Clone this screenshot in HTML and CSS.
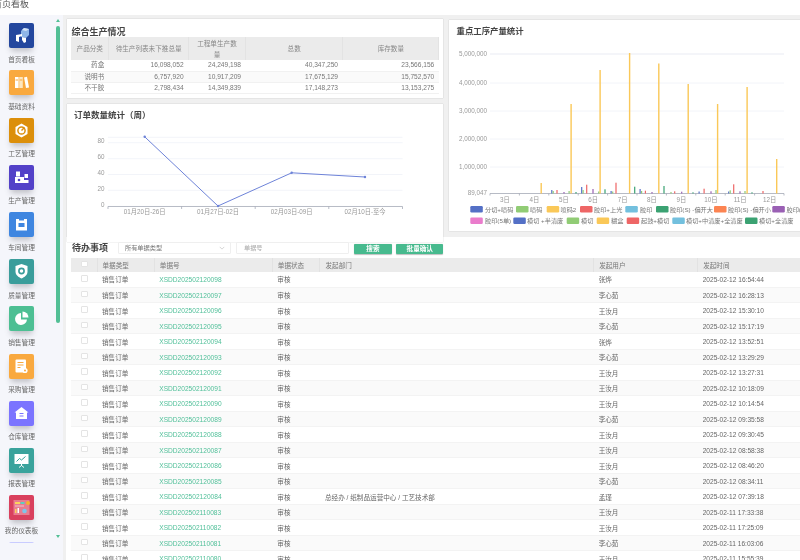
FILE: index.html
```html
<!DOCTYPE html>
<html lang="zh">
<head>
<meta charset="utf-8">
<title>首页看板</title>
<link rel="stylesheet" href="styles.css">
</head>
<body>
<header class="topbar"><span class="topbar-title">首页看板</span></header>
<div class="shell">
  <aside class="sidebar">
    <nav class="nav">
      <a class="nav-item"><span class="ico c1"><svg viewBox="0 0 25 25"><path d="M12 8l3-3 5 1v6l-3 3-5-1z" fill="#8fb6e8"/><path d="M15 5l5 1-3 2-4-1z" fill="#d5e4f7"/><path d="M7 12l6-1v2l-3 1v5l-3-1z" fill="#fff"/><path d="M13 14l4 1v4l-2 1-2-3z" fill="#fff"/></svg></span><span class="nav-label">首页看板</span></a>
      <a class="nav-item"><span class="ico c2"><svg viewBox="0 0 25 25"><rect x="6" y="7" width="3.6" height="11" fill="#fff"/><rect x="10.2" y="7" width="3.6" height="11" fill="#fde6bf"/><path d="M15 7.4l3-.6 2 10.6-3 .6z" fill="#fff"/><path d="M6.5 10h2.6M10.7 10h2.6" stroke="#f9a93f"/></svg></span><span class="nav-label">基础资料</span></a>
      <a class="nav-item"><span class="ico c3"><svg viewBox="0 0 25 25"><path d="M12.5 5.5l6 3.5v7l-6 3.5-6-3.5V9z" fill="#fff"/><circle cx="12.5" cy="12.5" r="3.6" fill="none" stroke="#dc8f0b" stroke-width="1.5"/><path d="M12.5 12.5l3-3" stroke="#dc8f0b" stroke-width="1.4"/></svg></span><span class="nav-label">工艺管理</span></a>
      <a class="nav-item"><span class="ico c4"><svg viewBox="0 0 25 25"><rect x="7" y="6.5" width="4" height="5" fill="#fff"/><path d="M6 12h9v6H6z" fill="#fff"/><rect x="15.5" y="9" width="3.5" height="4" fill="#fff"/><rect x="15" y="15" width="4.5" height="3" fill="#fff"/><circle cx="10" cy="15" r="1.3" fill="#5341c8"/></svg></span><span class="nav-label">生产管理</span></a>
      <a class="nav-item"><span class="ico c5"><svg viewBox="0 0 25 25"><path d="M7 7h3v1.500h5V7h3v11.500H7z" fill="#fff"/><rect x="9.500" y="11" width="6" height="4" fill="#3f86e0"/></svg></span><span class="nav-label">车间管理</span></a>
      <a class="nav-item"><span class="ico c6"><svg viewBox="0 0 25 25"><path d="M12.500 5l6 2v5.500c0 3.500-3 5.700-6 7-3-1.300-6-3.500-6-7V7z" fill="#fff"/><circle cx="12.500" cy="12" r="2.600" fill="none" stroke="#3a9d9b" stroke-width="1.600"/></svg></span><span class="nav-label">质量管理</span></a>
      <a class="nav-item"><span class="ico c7"><svg viewBox="0 0 25 25"><path d="M12 7a6 6 0 1 0 6 6.500h-6z" fill="#fff"/><path d="M13.500 5.500a6 6 0 0 1 6 6h-6z" fill="#fff"/></svg></span><span class="nav-label">销售管理</span></a>
      <a class="nav-item"><span class="ico c2"><svg viewBox="0 0 25 25"><rect x="6.500" y="5.500" width="10.500" height="13" rx="1" fill="#fff"/><path d="M8.500 8.500h6M8.500 11h6M8.500 13.500h3" stroke="#f9a93f"/><circle cx="16" cy="16.500" r="2.600" fill="#fff"/><circle cx="16" cy="16.500" r="1" fill="#f9a93f"/></svg></span><span class="nav-label">采购管理</span></a>
      <a class="nav-item"><span class="ico c9"><svg viewBox="0 0 25 25"><path d="M12.500 6l7 5.500h-1.500V18H7v-6.500H5.500z" fill="#fff"/><path d="M10.500 12.500h4M10.500 15h4" stroke="#7b74ff"/></svg></span><span class="nav-label">仓库管理</span></a>
      <a class="nav-item"><span class="ico c10"><svg viewBox="0 0 25 25"><rect x="5.500" y="6" width="14" height="10" fill="#fff"/><path d="M7.500 13.500l3-3 2 1.500 4-3.500" fill="none" stroke="#3aa39c"/><path d="M12.500 16v2M10 19.500l2.500-2 2.500 2" stroke="#fff" fill="none"/></svg></span><span class="nav-label">报表管理</span></a>
      <a class="nav-item"><span class="ico c11"><svg viewBox="0 0 25 25"><rect x="4.500" y="5" width="16" height="15" fill="#e87d90"/><rect x="6" y="7" width="5" height="2" fill="#fbd45c"/><rect x="11.500" y="7" width="4" height="2" fill="#5dd0c0"/><circle cx="19" cy="8" r="2" fill="#f7b32b"/><path d="M6 11h9" stroke="#f4c0ca"/><rect x="6" y="14" width="1.500" height="4" fill="#fbd45c"/><rect x="8.500" y="13" width="1.500" height="5" fill="#fff"/><circle cx="15.500" cy="16" r="2.300" fill="#7cc6ea"/></svg></span><span class="nav-label">我的仪表板</span></a>
      <a class="nav-item"><span class="ico c12"></span></a>
    </nav>
    <div class="scroll">
      <span class="arrow-up"></span>
      <span class="thumb"></span>
      <span class="arrow-down"></span>
    </div>
  </aside>
  <main class="main">
    <section class="top">
      <div class="left-col">
        <div class="card summary">
          <h2 class="title summary-title">综合生产情况</h2>
          <table class="sum-table">
            <colgroup><col class="s1"><col class="s2"><col class="s3"><col class="s4"><col class="s5"></colgroup>
            <thead><tr><th>产品分类</th><th>待生产列表未下推总量</th><th>工程单生产数<br>量</th><th>总数</th><th>库存数量</th></tr></thead>
            <tbody>
              <tr><td>药盒</td><td>16,098,052</td><td>24,249,198</td><td>40,347,250</td><td>23,566,156</td></tr>
              <tr><td>说明书</td><td>6,757,920</td><td>10,917,209</td><td>17,675,129</td><td>15,752,570</td></tr>
              <tr><td>不干胶</td><td>2,798,434</td><td>14,349,839</td><td>17,148,273</td><td>13,153,275</td></tr>
            </tbody>
          </table>
        </div>
        <div class="card orders">
          <h2 class="title chart-title">订单数量统计（周）</h2>
          <svg class="line-chart" viewBox="67 124 376.600 117.500">
            <g class="grid">
              <path d="M108 137.300H402.500M108 142.700H402.500M108 158.700H402.500M108 174.500H402.500M108 190.300H402.500"/>
            </g>
            <path class="axis" d="M108 206.500H402.500M108 206.500v2.500M181.600 206.500v2.500M255.200 206.500v2.500M328.800 206.500v2.500M402.500 206.500v2.500"/>
            <g class="lbl" text-anchor="end">
              <text x="104.500" y="143.300">80</text><text x="104.500" y="159.500">60</text><text x="104.500" y="175.500">40</text><text x="104.500" y="191.500">20</text><text x="104.500" y="207.500">0</text>
            </g>
            <g class="lbl" text-anchor="middle">
              <text x="144.700" y="214.500">01月20日-26日</text><text x="218" y="214.500">01月27日-02日</text><text x="291.700" y="214.500">02月03日-09日</text><text x="365" y="214.500">02月10日-至今</text>
            </g>
            <polyline class="line" points="144.700,136.800 218,206 291.700,172.800 365,177"/>
            <g class="dots"><circle cx="144.700" cy="136.800" r="1.200"/><circle cx="218" cy="206" r="1.200"/><circle cx="291.700" cy="172.800" r="1.200"/><circle cx="365" cy="177" r="1.200"/></g>
          </svg>
        </div>
      </div>
      <div class="card process">
        <h2 class="title process-title">重点工序产量统计</h2>
        <svg class="bar-chart" viewBox="449 40 351 191">
          <path class="grid-top" d="M490 54H784"/>
          <path class="grid" d="M490 83H784M490 111H784M490 139H784M490 167H784"/>
          <path class="axis" d="M490 193.500H784M490 193.500v2M519.400 193.500v2M548.800 193.500v2M578.200 193.500v2M607.600 193.500v2M637 193.500v2M666.400 193.500v2M695.800 193.500v2M725.200 193.500v2M754.600 193.500v2M784 193.500v2"/>
          <g class="lbl" text-anchor="end">
            <text x="487" y="56">5,000,000</text><text x="487" y="85">4,000,000</text><text x="487" y="113">3,000,000</text><text x="487" y="141">2,000,000</text><text x="487" y="169">1,000,000</text><text x="487" y="195">89,047</text>
          </g>
          <g class="lbl" text-anchor="middle">
            <text x="505" y="201.500">3日</text><text x="534.400" y="201.500">4日</text><text x="563.800" y="201.500">5日</text><text x="593.200" y="201.500">6日</text><text x="622.600" y="201.500">7日</text><text x="652" y="201.500">8日</text><text x="681.400" y="201.500">9日</text><text x="710.800" y="201.500">10日</text><text x="740.200" y="201.500">11日</text><text x="769.600" y="201.500">12日</text>
          </g>
          <g class="bars yellow">
            <rect x="540.500" y="183" width="1.400" height="10.500"/><rect x="570.400" y="104" width="1.400" height="89.500"/><rect x="599.400" y="70" width="1.400" height="123.500"/><rect x="628.900" y="53" width="1.400" height="140.500"/><rect x="658.100" y="63.500" width="1.400" height="130"/><rect x="687.500" y="84" width="1.400" height="109.500"/><rect x="716.900" y="104" width="1.400" height="89.500"/><rect x="746.400" y="87" width="1.400" height="106.500"/><rect x="776" y="159" width="1.400" height="34.500"/>
          </g>
          <g class="bars blue">
            <rect x="551.200" y="190" width="1.200" height="3.500"/><rect x="581.100" y="187" width="1.200" height="6.500"/><rect x="610.500" y="191" width="1.200" height="2.500"/><rect x="639.500" y="189" width="1.200" height="4.500"/><rect x="698.500" y="191.500" width="1.200" height="2"/><rect x="728.100" y="191.500" width="1.200" height="2"/>
          </g>
          <g class="bars lgreen">
            <rect x="552.600" y="191" width="1.200" height="2.500"/><rect x="568.500" y="191" width="1.200" height="2.500"/><rect x="582.500" y="190" width="1.200" height="3.500"/><rect x="598.100" y="191.500" width="1.200" height="2"/><rect x="612.100" y="191.500" width="1.200" height="2"/><rect x="641" y="191" width="1.200" height="2.500"/><rect x="670.400" y="192" width="1.200" height="1.500"/><rect x="715.400" y="190" width="1.200" height="3.500"/><rect x="729.600" y="190.300" width="1.200" height="3.200"/><rect x="744.400" y="191" width="1.200" height="2.500"/>
          </g>
          <g class="bars red">
            <rect x="556.400" y="190" width="1.200" height="3.500"/><rect x="586.100" y="184.700" width="1.200" height="8.800"/><rect x="615.400" y="182.700" width="1.200" height="10.800"/><rect x="644.800" y="190.700" width="1.200" height="2.800"/><rect x="674.100" y="191.300" width="1.200" height="2.200"/><rect x="703.500" y="188.700" width="1.200" height="4.800"/><rect x="733.100" y="184.300" width="1.200" height="9.200"/><rect x="762.400" y="191" width="1.200" height="2.500"/>
          </g>
          <g class="bars purple">
            <rect x="563.400" y="192" width="1.200" height="1.500"/><rect x="592.400" y="189" width="1.200" height="4.500"/><rect x="651.400" y="192" width="1.200" height="1.500"/><rect x="681.100" y="191.700" width="1.200" height="1.800"/><rect x="710.400" y="191.300" width="1.200" height="2.200"/><rect x="739.400" y="191.300" width="1.200" height="2.200"/>
          </g>
          <g class="bars dgreen">
            <rect x="575.400" y="192" width="1.200" height="1.500"/><rect x="604.400" y="189.300" width="1.200" height="4.200"/><rect x="634.100" y="186.700" width="1.200" height="6.800"/><rect x="663.400" y="186" width="1.200" height="7.500"/><rect x="692.400" y="192.300" width="1.200" height="1.200"/><rect x="751.400" y="192.300" width="1.200" height="1.200"/>
          </g>
          <g class="legend-swatches">
            <rect class="s-blue" x="470.300" y="206" width="12.500" height="6.500" rx="1.200"/><rect class="s-lgreen" x="516" y="206" width="12.500" height="6.500" rx="1.200"/><rect class="s-yellow" x="546.700" y="206" width="12.500" height="6.500" rx="1.200"/><rect class="s-red" x="580" y="206" width="12.500" height="6.500" rx="1.200"/><rect class="s-lblue" x="625.300" y="206" width="12.500" height="6.500" rx="1.200"/><rect class="s-dgreen" x="656" y="206" width="12.500" height="6.500" rx="1.200"/><rect class="s-orange" x="714" y="206" width="12.500" height="6.500" rx="1.200"/><rect class="s-purple" x="772.300" y="206" width="12.500" height="6.500" rx="1.200"/>
            <rect class="s-pink" x="470.300" y="217.500" width="12.500" height="6.500" rx="1.200"/><rect class="s-blue" x="513.300" y="217.500" width="12.500" height="6.500" rx="1.200"/><rect class="s-lgreen" x="566.700" y="217.500" width="12.500" height="6.500" rx="1.200"/><rect class="s-yellow" x="596.700" y="217.500" width="12.500" height="6.500" rx="1.200"/><rect class="s-red" x="626.700" y="217.500" width="12.500" height="6.500" rx="1.200"/><rect class="s-lblue" x="672.300" y="217.500" width="12.500" height="6.500" rx="1.200"/><rect class="s-dgreen" x="745" y="217.500" width="12.500" height="6.500" rx="1.200"/>
          </g>
          <g class="leg">
            <text x="485" y="211.500">分切+喷码</text><text x="530" y="211.500">喷码</text><text x="560.500" y="211.500">喷码2</text><text x="594" y="211.500">胶印+上光</text><text x="640" y="211.500">胶印</text><text x="670" y="211.500">胶印(S) -偏开大</text><text x="728" y="211.500">胶印(S) -偏开小</text><text x="786.500" y="211.500">胶印(S)</text>
            <text x="485" y="223">胶印(5单)</text><text x="527" y="223">模切 +半清废</text><text x="581" y="223">模切</text><text x="611" y="223">糊盒</text><text x="641" y="223">起鼓+模切</text><text x="686" y="223">模切+中清废+全清废</text><text x="759" y="223">模切+全清废</text>
          </g>
        </svg>
      </div>
    </section>
    <section class="todo">
      <div class="toolbar">
        <h2 class="title todo-title">待办事项</h2>
        <div class="select"><span>所有单据类型</span><svg class="chev" viewBox="0 0 8 5"><path d="M1 1l3 3 3-3" fill="none" stroke="#bbb" stroke-width=".8"/></svg></div>
        <div class="input">单据号</div>
        <button class="btn btn-search">搜索</button>
        <button class="btn btn-batch">批量确认</button>
      </div>
      <table class="todo-table">
        <colgroup><col class="t1"><col class="t2"><col class="t3"><col class="t4"><col class="t5"><col class="t6"><col class="t7"></colgroup>
        <thead><tr><th><span class="cb"></span></th><th>单据类型</th><th>单据号</th><th>单据状态</th><th>发起部门</th><th>发起用户</th><th>发起时间</th></tr></thead>
        <tbody>
          <tr><td><span class="cb"></span></td><td>销售订单</td><td class="link">XSDD202502120098</td><td>审核</td><td></td><td>张烨</td><td>2025-02-12 16:54:44</td></tr>
          <tr><td><span class="cb"></span></td><td>销售订单</td><td class="link">XSDD202502120097</td><td>审核</td><td></td><td>李心茹</td><td>2025-02-12 16:28:13</td></tr>
          <tr><td><span class="cb"></span></td><td>销售订单</td><td class="link">XSDD202502120096</td><td>审核</td><td></td><td>王汝月</td><td>2025-02-12 15:30:10</td></tr>
          <tr><td><span class="cb"></span></td><td>销售订单</td><td class="link">XSDD202502120095</td><td>审核</td><td></td><td>李心茹</td><td>2025-02-12 15:17:19</td></tr>
          <tr><td><span class="cb"></span></td><td>销售订单</td><td class="link">XSDD202502120094</td><td>审核</td><td></td><td>张烨</td><td>2025-02-12 13:52:51</td></tr>
          <tr><td><span class="cb"></span></td><td>销售订单</td><td class="link">XSDD202502120093</td><td>审核</td><td></td><td>李心茹</td><td>2025-02-12 13:29:29</td></tr>
          <tr><td><span class="cb"></span></td><td>销售订单</td><td class="link">XSDD202502120092</td><td>审核</td><td></td><td>王汝月</td><td>2025-02-12 13:27:31</td></tr>
          <tr><td><span class="cb"></span></td><td>销售订单</td><td class="link">XSDD202502120091</td><td>审核</td><td></td><td>王汝月</td><td>2025-02-12 10:18:09</td></tr>
          <tr><td><span class="cb"></span></td><td>销售订单</td><td class="link">XSDD202502120090</td><td>审核</td><td></td><td>王汝月</td><td>2025-02-12 10:14:54</td></tr>
          <tr><td><span class="cb"></span></td><td>销售订单</td><td class="link">XSDD202502120089</td><td>审核</td><td></td><td>李心茹</td><td>2025-02-12 09:35:58</td></tr>
          <tr><td><span class="cb"></span></td><td>销售订单</td><td class="link">XSDD202502120088</td><td>审核</td><td></td><td>王汝月</td><td>2025-02-12 09:30:45</td></tr>
          <tr><td><span class="cb"></span></td><td>销售订单</td><td class="link">XSDD202502120087</td><td>审核</td><td></td><td>王汝月</td><td>2025-02-12 08:58:38</td></tr>
          <tr><td><span class="cb"></span></td><td>销售订单</td><td class="link">XSDD202502120086</td><td>审核</td><td></td><td>王汝月</td><td>2025-02-12 08:46:20</td></tr>
          <tr><td><span class="cb"></span></td><td>销售订单</td><td class="link">XSDD202502120085</td><td>审核</td><td></td><td>李心茹</td><td>2025-02-12 08:34:11</td></tr>
          <tr><td><span class="cb"></span></td><td>销售订单</td><td class="link">XSDD202502120084</td><td>审核</td><td>总经办 / 纸制品运营中心 / 工艺技术部</td><td>孟瑾</td><td>2025-02-12 07:39:18</td></tr>
          <tr><td><span class="cb"></span></td><td>销售订单</td><td class="link">XSDD202502110083</td><td>审核</td><td></td><td>王汝月</td><td>2025-02-11 17:33:38</td></tr>
          <tr><td><span class="cb"></span></td><td>销售订单</td><td class="link">XSDD202502110082</td><td>审核</td><td></td><td>王汝月</td><td>2025-02-11 17:25:09</td></tr>
          <tr><td><span class="cb"></span></td><td>销售订单</td><td class="link">XSDD202502110081</td><td>审核</td><td></td><td>李心茹</td><td>2025-02-11 16:03:06</td></tr>
          <tr><td><span class="cb"></span></td><td>销售订单</td><td class="link">XSDD202502110080</td><td>审核</td><td></td><td>王汝月</td><td>2025-02-11 15:55:39</td></tr>
        </tbody>
      </table>
    </section>
  </main>
</div>
</body>
</html>
```

FILE: styles.css
```css
* { box-sizing: border-box; }
html, body { margin: 0; height: 560px; overflow: hidden; }
body {
  width: 800px;
  font-family: "Liberation Sans", "Noto Sans CJK SC", sans-serif;
  font-size: 6.6px;
  color: #666;
  background: #fff;
  display: flex;
  flex-direction: column;
  filter: blur(.3px);
}

/* Top bar */
.topbar { height: 15px; background: #fff; overflow: hidden; flex: none; }
.topbar-title { display: block; margin: -2px 0 0 -7px; font-size: 9px; line-height: 12px; color: #555; }

.shell { flex: 1; display: flex; min-height: 0; }

/* Sidebar */
.sidebar { width: 63px; flex: none; display: flex; background: #f5f6fb; }
.nav { width: 43px; height: 528px; padding-top: 8.3px; overflow: hidden; flex: none; }
.nav-item { display: flex; flex-direction: column; align-items: center; height: 47.2px; }
.ico { display: block; width: 25px; height: 25px; border-radius: 2px; flex: none; box-shadow: 0 5px 6px -2px rgba(60, 60, 70, .3); }
.ico svg { display: block; width: 25px; height: 25px; }
.nav-label { margin-top: 7.300px; font-size: 6.7px; line-height: 8px; color: #666; white-space: nowrap; }
.c1 { background: #23479e; }
.c2 { background: #f9a93f; }
.c3 { background: #dc8f0b; }
.c4 { background: #5341c8; }
.c5 { background: #3f86e0; }
.c6 { background: #3a9d9b; }
.c7 { background: #4dbf93; }
.c9 { background: #7b74ff; }
.c10 { background: #3aa39c; }
.c11 { background: #d9405e; }
.c12 { background: #c9ccff; box-shadow: none; }

.scroll { width: 4px; margin-left: 13px; height: 523px; padding-top: 4px; display: flex; flex-direction: column; align-items: center; }
.arrow-up { width: 0; height: 0; border: 2px solid transparent; border-top: 0; border-bottom: 3px solid #52bf95; flex: none; }
.thumb { width: 4px; height: 297px; margin-top: 4px; border-radius: 2px; background: #52bf95; flex: none; }
.arrow-down { width: 0; height: 0; margin-top: auto; border: 2px solid transparent; border-bottom: 0; border-top: 3px solid #52bf95; flex: none; }

/* Main */
.main { flex: 1; min-width: 0; background: #f0f0f0; overflow: hidden; padding-top: 4.3px; }
.top { height: 217.500px; padding-left: 3.700px; display: flex; gap: 5.600px; }
.left-col { width: 376.600px; flex: none; display: flex; flex-direction: column; gap: 6px; position: relative; z-index: 1; }
.card { background: #fff; box-shadow: 0 0 1px rgba(0, 0, 0, .25); }
.summary { height: 79px; flex: none; padding: 8px 4.300px 0; }
.orders { height: 137.500px; flex: none; }
.process { flex: 1; height: 211px; margin-top: .7px; min-width: 0; }

.title { margin: 0; font-weight: 700; color: #444; }
.summary-title { font-size: 9px; line-height: 10px; height: 10px; margin-left: .5px; }
.chart-title { font-size: 8.500px; line-height: 10px; height: 20px; padding: 6px 0 0 7.300px; }
.process-title { font-size: 8.400px; line-height: 10px; height: 20px; padding: 6px 0 0 7.700px; }
.todo-title { font-size: 9px; line-height: 12.600px; width: 45.500px; flex: none; margin-left: 1px; }

/* Summary table */
.sum-table { width: 368px; border-collapse: collapse; table-layout: fixed; }
.s1 { width: 38px; }
.s2 { width: 79.300px; }
.s3 { width: 57.400px; }
.s4 { width: 97px; }
.s5 { width: 96.300px; }
.sum-table th { height: 22.700px; background: #ebebeb; font-weight: 400; line-height: 11px; color: #888; text-align: center; padding: 0; border-right: 1px solid #e3e3e3; }
.sum-table td { height: 11.300px; padding: 0 4.700px 0 0; text-align: right; border-bottom: 1px solid #f1f1f1; line-height: 8px; color: #777; }
.sum-table tbody tr:nth-child(even) td { background: #fafafa; }

/* Charts */
.line-chart { display: block; width: 376.600px; height: 117.500px; }
.bar-chart { display: block; width: 351px; height: 191px; }
.grid, .grid path { fill: none; stroke: #eff1f7; stroke-width: .8; }
.grid-top { fill: none; stroke: #f4f5f9; stroke-width: 2; }
.axis { fill: none; stroke: #a4a9b6; stroke-width: .8; }
.lbl text { font-size: 6.300px; fill: #999; }
.leg text { font-size: 6.200px; fill: #777; }
.line { fill: none; stroke: #6d83d8; stroke-width: 1; }
.dots circle { fill: #6d83d8; }
.yellow rect, .s-yellow { fill: #fac858; }
.blue rect, .s-blue { fill: #5470c6; }
.lgreen rect, .s-lgreen { fill: #91cc75; }
.red rect, .s-red { fill: #ee6666; }
.purple rect, .s-purple { fill: #9a60b4; }
.dgreen rect, .s-dgreen { fill: #3ba272; }
.s-lblue { fill: #73c0de; }
.s-orange { fill: #fc8452; }
.s-pink { fill: #ea7ccc; }

/* Todo panel */
.todo { margin-left: 3px; height: 324px; background: #fff; padding: 4.900px 0 0 5px; }
.toolbar { display: flex; align-items: flex-start; height: 12.600px; }
.select, .input { height: 12.600px; background: #fff; border: 1px solid #efefef; border-radius: 1px; font-size: 6.200px; line-height: 10.600px; color: #777; }
.select { width: 113.300px; padding-left: 6.500px; display: flex; align-items: center; justify-content: space-between; padding-right: 5px; position: relative; z-index: 2; }
.chev { width: 6px; height: 4px; }
.input { width: 112.300px; margin-left: 5.700px; padding-left: 6.500px; color: #aaa; position: relative; z-index: 2; }
.btn { height: 10px; margin-top: 2.600px; padding: 0; border: 0; border-radius: 1px; background: #47ba8e; color: #fff; font: 700 6.600px/10px "Liberation Sans", "Noto Sans CJK SC", sans-serif; box-shadow: 0 .5px 1px rgba(0, 0, 0, .25); }
.btn-search { width: 37.700px; margin-left: 5.300px; }
.btn-batch { width: 46.600px; margin-left: 4.700px; }

.todo-table { width: 729px; margin-top: 3.700px; border-collapse: collapse; table-layout: fixed; }
.t1 { width: 26px; }
.t2 { width: 57.300px; }
.t3 { width: 118px; }
.t4 { width: 47.700px; }
.t5 { width: 273.700px; }
.t6 { width: 104px; }
.t7 { width: 102.300px; }
.todo-table th { height: 14px; padding: 0 0 0 5px; background: #ebebeb; font-weight: 400; text-align: left; color: #777; border-right: 1px solid #e2e2e2; }
.todo-table th:last-child { border-right: 0; }
.todo-table td { height: 15.500px; padding: 0 0 0 5px; white-space: nowrap; border-bottom: 1px solid #f3f3f3; color: #666; }
.todo-table tbody tr:nth-child(even) td { background: #fafafa; }
.todo-table .link { color: #52c09a; }
.cb { display: block; width: 6.500px; height: 6.500px; margin: -2px 0 0 5px; background: #fff; border: 1px solid #e4e4e4; border-radius: 1px; }
```
